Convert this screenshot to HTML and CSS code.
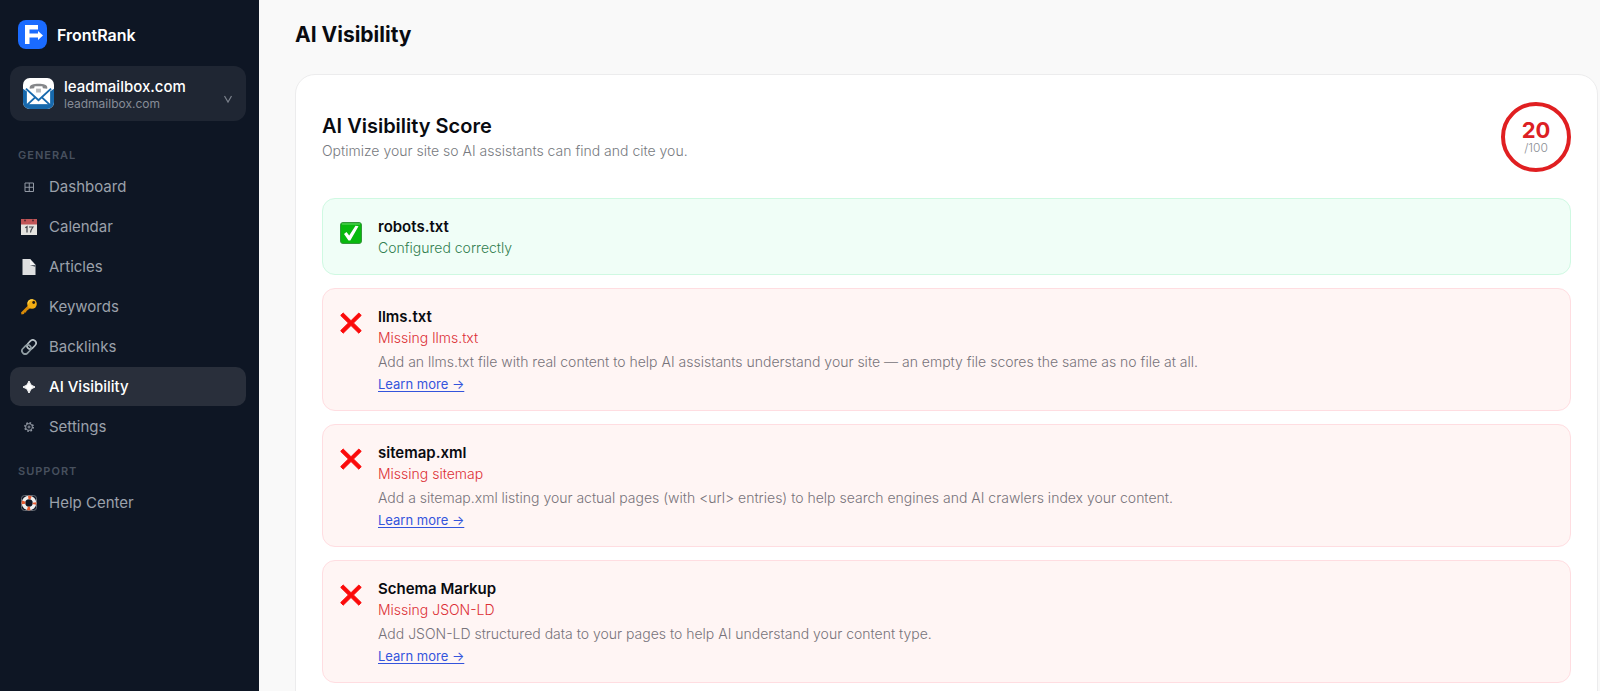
FILE: index.html
```html
<!DOCTYPE html>
<html lang="en">

<head>
    <meta charset="UTF-8">
    <meta name="viewport" content="width=device-width, initial-scale=1.0">
    <title>AI Visibility - FrontRank</title>
    <link rel="stylesheet" href="styles.css">
</head>

<body>
    <!-- shared status icons -->
    <svg class="sprite" aria-hidden="true">
        <symbol id="cross" viewBox="0 0 22 22">
            <path d="M3.2 1 11 8.7 18.8 1 21.2 3.4 13.5 11 21.2 18.6 18.8 21.2 11 13.5 3.2 21.2.7 18.6 8.4 11 .7 3.4z" fill="#fb0a0a" stroke="#fb0a0a" stroke-linejoin="round" />
        </symbol>
    </svg>

    <aside class="sidebar">
        <a class="brand" href="#">
            <svg class="brand-logo" viewBox="0 0 29 29" aria-hidden="true">
                <rect width="29" height="29" rx="8" fill="#1a6bff" />
                <path d="M7 5H20V9.500H11.500V13.500H20V11L25 15.500 20 20V17.500H11.500V24H7z" fill="#fff" />
            </svg>
            <span>FrontRank</span>
        </a>

        <button class="site" type="button">
            <svg class="site-icon" viewBox="0 0 32 32" aria-hidden="true">
                <rect width="32" height="32" rx="7" fill="#fff" />
                <path d="M0 11 4 14V12H28V14L32 11V25a7 7 0 0 1-7 7H7a7 7 0 0 1-7-7z" fill="#1769ad" />
                <path d="M4 11H28V27H4z" fill="#fff" />
                <path d="M3 11 16 23 29 11M4 28 12.500 20M28 28 19.500 20" fill="none" stroke="#1769ad" stroke-width="2" />
                <path d="M6 11H26L16 20z" fill="#fff" />
                <path d="M7 11C6 7 11 6 16 6S26 7 25 11L20.500 10.500 20 8.500H12L11.500 10.500z" fill="#85878a" />
                <path d="M13.500 11H18.500V15H13.500z" fill="#b7b9bb" />
            </svg>
            <span class="site-text">
                <span class="site-name">leadmailbox.com</span>
                <span class="site-url">leadmailbox.com</span>
            </span>
            <svg class="chevron" viewBox="0 0 10 10" aria-hidden="true">
                <path d="M1.500 2 5 8 8.500 2" fill="none" stroke="#7b818c" stroke-width="1.200" />
            </svg>
        </button>

        <nav>
            <h2 class="nav-label">GENERAL</h2>
            <ul class="nav-list">
                <li>
                    <a class="nav-item" href="#">
                        <svg viewBox="0 0 16 16" aria-hidden="true">
                            <path d="M4 4H12.500V12.500H4zM8.250 4V12.500M4 8.250H12.500" fill="none" stroke="#9299a4" />
                        </svg>
                        Dashboard
                    </a>
                </li>
                <li>
                    <a class="nav-item" href="#">
                        <svg viewBox="0 0 16 16" aria-hidden="true">
                            <path d="M0 0H16V16H0z" fill="#e4e3df" />
                            <path d="M0 0H16V5.500H0z" fill="#c15557" />
                            <circle cx="4" cy="1.500" r="1" fill="#542b30" />
                            <circle cx="12" cy="1.500" r="1" fill="#542b30" />
                            <path d="M4.300 8.800 6 7.700V13.500M8 8H12Q10 10.500 9.500 13.500" fill="none" stroke="#41444a" stroke-width="1.200" />
                        </svg>
                        Calendar
                    </a>
                </li>
                <li>
                    <a class="nav-item" href="#">
                        <svg viewBox="0 0 16 16" aria-hidden="true">
                            <path d="M1.500 0H9L14.500 6V16H1.500z" fill="#dedfe0" />
                            <path d="M9 0 14.500 6V8L9 6z" fill="#596069" />
                            <path d="M9 0 14.500 6H9z" fill="#f4f4f4" />
                        </svg>
                        Articles
                    </a>
                </li>
                <li>
                    <a class="nav-item" href="#">
                        <svg viewBox="0 0 16 16" aria-hidden="true">
                            <path d="M7.500 6 10 8.500 5.500 12 5 13.500H3.500L3 15 .5 15.500 0 13.500z" fill="#d88a08" />
                            <circle cx="11" cy="5" r="4.800" fill="#f4ae12" />
                            <path d="M7 4.500A4 4 0 0 1 12 1" fill="none" stroke="#ffd34c" stroke-width="1.200" />
                            <circle cx="12.700" cy="3.500" r="1.400" fill="#241b14" />
                        </svg>
                        Keywords
                    </a>
                </li>
                <li>
                    <a class="nav-item" href="#">
                        <svg viewBox="0 0 16 16" fill="none" stroke-width="1.700" aria-hidden="true">
                            <rect x="5.500" y="2.300" width="10" height="6.400" rx="3.200" transform="rotate(-45 10.500 5.500)" stroke="#b9c2c7" />
                            <rect x=".5" y="7.300" width="10" height="6.400" rx="3.200" transform="rotate(-45 5.500 10.500)" stroke="#909da3" />
                        </svg>
                        Backlinks
                    </a>
                </li>
                <li>
                    <a class="nav-item active" href="#" aria-current="page">
                        <svg viewBox="0 0 16 16" aria-hidden="true">
                            <path d="M8 2Q9 7 14 8 9 9 8 14 7 9 2 8 7 7 8 2z" fill="#fff" stroke="#fff" stroke-linejoin="round" />
                        </svg>
                        AI Visibility
                    </a>
                </li>
                <li>
                    <a class="nav-item" href="#">
                        <svg viewBox="0 0 16 16" fill="none" stroke="#9299a4" aria-hidden="true">
                            <circle cx="8" cy="8" r="4.200" stroke-dasharray="1.650 1.650" stroke-width="1.500" />
                            <circle cx="8" cy="8" r="3.400" />
                            <circle cx="8" cy="8" r="1" />
                        </svg>
                        Settings
                    </a>
                </li>
            </ul>

            <h2 class="nav-label support">SUPPORT</h2>
            <ul class="nav-list">
                <li>
                    <a class="nav-item" href="#">
                        <svg viewBox="0 0 16 16" fill="none" aria-hidden="true">
                            <rect x=".5" y=".5" width="15" height="15" rx="3" stroke="#646a73" />
                            <circle cx="8" cy="8" r="5.500" stroke="#eee" stroke-width="3.600" />
                            <circle cx="8" cy="8" r="5.500" stroke="#e65b31" stroke-width="3.600" stroke-dasharray="2.880 5.760" stroke-dashoffset="1.440" />
                        </svg>
                        Help Center
                    </a>
                </li>
            </ul>
        </nav>
    </aside>

    <main class="main">
        <h1 class="page-title">AI Visibility</h1>

        <section class="card">
            <header class="card-head">
                <div>
                    <h2 class="card-title">AI Visibility Score</h2>
                    <p class="card-sub">Optimize your site so AI assistants can find and cite you.</p>
                </div>
                <div class="score">
                    <strong>20</strong>
                    <span>/100</span>
                </div>
            </header>

            <ul class="checks">
                <li class="check pass">
                    <svg class="check-icon" viewBox="0 0 22 22" aria-hidden="true">
                        <rect x=".5" y=".5" width="21" height="21" rx="2.500" fill="#08b90e" stroke="#35963b" />
                        <path d="M2 2H20" stroke="#6bd66c" />
                        <path d="M4 12 6.500 10 9.200 13.500 15.500 3.800 18.500 4.300 10.300 18.500H8.500z" fill="#fff" />
                    </svg>
                    <div>
                        <h3 class="check-name">robots.txt</h3>
                        <p class="check-status">Configured correctly</p>
                    </div>
                </li>
                <li class="check fail">
                    <svg class="check-icon" aria-hidden="true"><use href="#cross" /></svg>
                    <div>
                        <h3 class="check-name">llms.txt</h3>
                        <p class="check-status">Missing llms.txt</p>
                        <p class="check-desc">Add an llms.txt file with real content to help AI assistants understand your site — an empty file scores the same as no file at all.</p>
                        <a class="check-link" href="#">Learn more →</a>
                    </div>
                </li>
                <li class="check fail">
                    <svg class="check-icon" aria-hidden="true"><use href="#cross" /></svg>
                    <div>
                        <h3 class="check-name">sitemap.xml</h3>
                        <p class="check-status">Missing sitemap</p>
                        <p class="check-desc">Add a sitemap.xml listing your actual pages (with &lt;url&gt; entries) to help search engines and AI crawlers index your content.</p>
                        <a class="check-link" href="#">Learn more →</a>
                    </div>
                </li>
                <li class="check fail">
                    <svg class="check-icon" aria-hidden="true"><use href="#cross" /></svg>
                    <div>
                        <h3 class="check-name">Schema Markup</h3>
                        <p class="check-status">Missing JSON-LD</p>
                        <p class="check-desc">Add JSON-LD structured data to your pages to help AI understand your content type.</p>
                        <a class="check-link" href="#">Learn more →</a>
                    </div>
                </li>
            </ul>
        </section>
    </main>
</body>

</html>
```
FILE: styles.css
```css
* {
    box-sizing: border-box;
    margin: 0;
    padding: 0;
}

body {
    display: flex;
    min-height: 100vh;
    background: #f9f9f9;
    color: #090b10;
    font-family: Inter, "Open Sans", sans-serif;
    font-size: 14px;
}

ul {
    list-style: none;
}

a {
    text-decoration: none;
}

.sprite {
    position: absolute;
    width: 0;
    height: 0;
}

/* sidebar */

.sidebar {
    flex: 0 0 259px;
    padding: 20px 13px 20px 10px;
    background: #0e1624;
}

.brand {
    display: flex;
    align-items: center;
    gap: 10px;
    padding-left: 8px;
    color: #fff;
    font-size: 16px;
    font-weight: 600;
}

.brand-logo {
    width: 29px;
    height: 29px;
}

.site {
    display: flex;
    align-items: center;
    gap: 10px;
    width: 100%;
    height: 55px;
    margin-top: 17px;
    padding: 0 13px;
    border: none;
    border-radius: 12px;
    background: #1f2633;
    font-family: inherit;
    text-align: left;
    cursor: pointer;
}

.site-icon {
    width: 31px;
    height: 31px;
}

.site-text {
    display: flex;
    flex: 1;
    flex-direction: column;
    padding-top: 2px;
}

.site-name {
    color: #fff;
    font-size: 15px;
    font-weight: 500;
    line-height: 18px;
}

.site-url {
    color: #868c97;
    font-size: 12px;
    line-height: 16px;
}

.chevron {
    width: 10px;
    height: 10px;
    margin-top: 11px;
}

.nav-label {
    padding: 25px 0 3px 8px;
    color: #47505e;
    font-size: 11px;
    font-weight: 600;
    line-height: 18px;
    letter-spacing: 1px;
}

.nav-label.support {
    padding-top: 16px;
}

.nav-list {
    display: flex;
    flex-direction: column;
    gap: 1px;
}

.nav-item {
    display: flex;
    align-items: center;
    gap: 12px;
    height: 39px;
    padding: 0 11px;
    border-radius: 10px;
    color: #9ba1ab;
    font-size: 15px;
}

.nav-item svg {
    width: 16px;
    height: 16px;
}

.nav-item.active {
    background: #292f3b;
    color: #fff;
    font-weight: 500;
}

/* content */

.main {
    flex: 1;
    padding: 20px 2px 20px 36px;
}

.page-title {
    font-size: 21px;
    font-weight: 700;
    line-height: 30px;
}

.card {
    margin-top: 24px;
    padding: 27px 26px;
    border: 1px solid #ececed;
    border-radius: 20px;
    background: #fff;
}

.card-head {
    display: flex;
    align-items: center;
    justify-content: space-between;
    margin-bottom: 26px;
}

.card-title {
    font-size: 20px;
    font-weight: 600;
    line-height: 28px;
}

.card-sub {
    color: #777a80;
    font-weight: 300;
    line-height: 22px;
}

.score {
    display: flex;
    flex-direction: column;
    align-items: center;
    justify-content: center;
    width: 70px;
    height: 70px;
    border: 4px solid #e01f21;
    border-radius: 50%;
}

.score strong {
    color: #dc2023;
    font-size: 22px;
    line-height: 22px;
}

.score span {
    color: #8b8e94;
    font-size: 12px;
    font-weight: 300;
    line-height: 14px;
}

.checks {
    display: flex;
    flex-direction: column;
    gap: 13px;
}

.check {
    display: flex;
    gap: 16px;
    padding: 17px 17px 16px;
    border: 1px solid;
    border-radius: 13px;
}

.pass {
    border-color: #cff9e2;
    background: #f0fef7;
}

.fail {
    border-color: #ffdde1;
    background: #fff5f4;
}

.check-icon {
    flex: none;
    width: 22px;
    height: 22px;
    margin-top: 6px;
}

.check-name {
    font-size: 15px;
    font-weight: 600;
    line-height: 22px;
}

.check-status {
    font-weight: 300;
    line-height: 20px;
}

.pass .check-status {
    color: #327f50;
}

.fail .check-status {
    color: #dc2f35;
}

.check-desc {
    margin-top: 4px;
    color: #77737a;
    font-weight: 300;
    line-height: 20px;
}

.check-link {
    display: block;
    width: fit-content;
    margin-top: 3px;
    color: #3454dc;
    font-size: 13px;
    line-height: 19px;
    text-decoration: underline;
    text-underline-offset: 2px;
}
```
